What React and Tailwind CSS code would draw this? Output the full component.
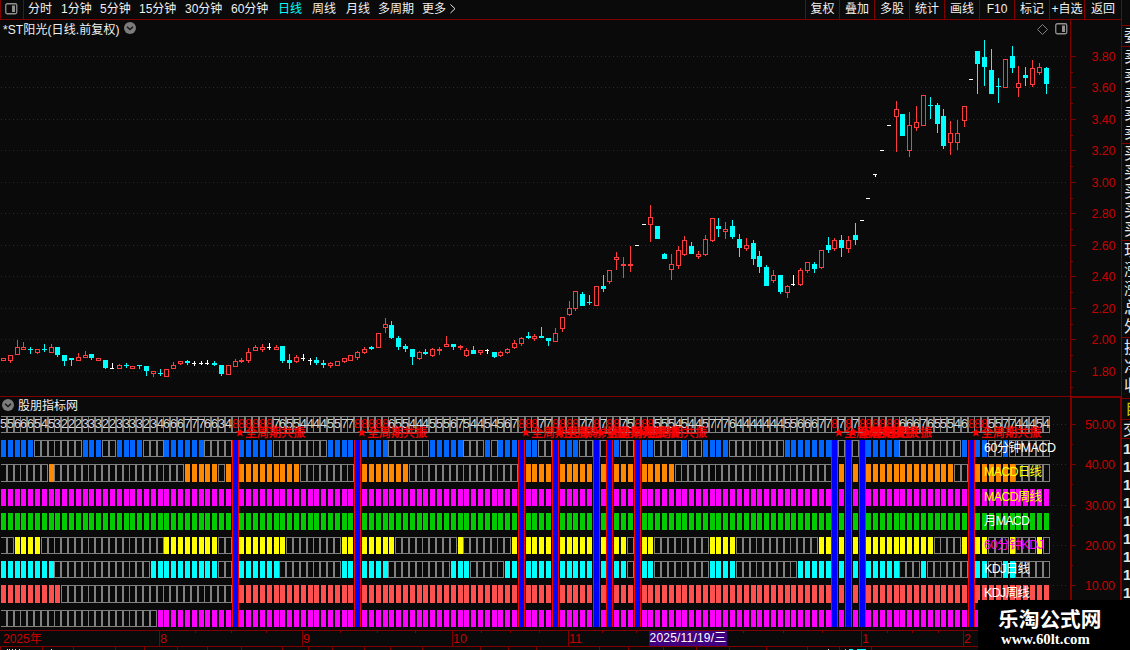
import React from 'react';

const FONT = 'font-["Liberation_Sans","Noto_Sans_CJK_SC",sans-serif]';
const COUNT = 154;
const RED = '#ff3c3c';
const CYAN = '#00ffff';
const LINE = '#800000';
const BG = '#0a0a0a';

// center pixel of a bar column
const px = (i) => Math.round(2.9 + 6.815 * i);

const periods = [
    { label: '分时', cls: 'w-[33px]' },
    { label: '1分钟', cls: 'w-[39px]' },
    { label: '5分钟', cls: 'w-[39px]' },
    { label: '15分钟', cls: 'w-[46px]' },
    { label: '30分钟', cls: 'w-[46px]' },
    { label: '60分钟', cls: 'w-[47px]' },
    { label: '日线', cls: 'w-[34px] text-[#00ffff]' },
    { label: '周线', cls: 'w-[34px]' },
    { label: '月线', cls: 'w-[32px]' },
    { label: '多周期', cls: 'w-[44px]' },
    { label: '更多', cls: 'w-[27px]' }
];

const tools = [
    { label: '复权', cls: 'w-[34px]' },
    { label: '叠加', cls: 'w-[35px]' },
    { label: '多股', cls: 'w-[35px]' },
    { label: '统计', cls: 'w-[35px]' },
    { label: '画线', cls: 'w-[35px]' },
    { label: 'F10', cls: 'w-[35px]' },
    { label: '标记', cls: 'w-[35px]' },
    { label: '+自选', cls: 'w-[35px]' },
    { label: '返回', cls: 'w-[37px]' }
];

// kind high top bottom low
const candles = `
r 358 358 361 361|r 355 355 361 363|r 340 347 355 355|r 342 347 350 350|c 347 349 350 354|r 349 349 353 354
c 344 349 350 352|r 344 347 353 353|c 347 347 355 357|c 355 355 361 366|c 358 358 360 366|r 353 357 361 361
r 351 355 358 358|c 354 354 358 360|r 358 358 361 361|c 360 360 368 369|w 363 368 369 369|r 364 365 369 369
c 363 365 366 368|r 366 366 369 369|c 365 365 366 369|c 366 366 371 376|r 371 371 374 377|c 369 373 374 376
r 369 369 377 377|r 362 365 369 369|r 361 361 364 365|c 360 361 363 365|w 361 363 364 366|w 361 363 364 365
w 360 363 364 365|c 361 363 365 366|c 365 365 374 376|r 365 365 375 375|r 359 361 367 367|r 358 360 362 363
r 348 352 361 363|r 345 347 351 351|r 344 347 350 352|w 343 347 348 350|r 345 347 350 350|c 346 346 361 363
c 354 360 363 369|r 355 357 362 363|w 354 358 359 361|w 358 360 361 365|c 357 360 363 365|c 360 363 365 368
r 362 363 366 368|r 361 361 366 366|r 358 358 362 363|r 355 355 361 361|r 351 352 358 360|r 347 349 353 354
c 346 347 349 350|r 333 333 348 348|r 318 324 328 333|c 321 325 338 339|c 336 338 347 350|c 344 346 349 352
c 349 349 357 365|r 351 352 359 360|c 349 352 354 355|r 348 349 356 357|r 347 349 351 355|r 336 344 347 347
c 344 344 347 350|r 345 346 348 350|r 348 350 356 357|c 346 350 354 354|r 350 350 353 355|w 349 350 351 354
c 352 352 357 358|r 351 352 356 357|r 348 349 353 354|r 340 343 348 349|r 337 338 344 346|c 332 336 338 339
r 334 336 339 341|c 327 336 338 338|c 338 338 341 346|r 328 333 342 342|r 317 317 329 332|r 301 308 315 316
r 291 291 309 311|c 292 294 306 306|c 295 302 303 305|r 286 286 306 306|c 275 286 289 292|r 270 270 282 284
r 252 257 260 270|r 257 264 266 278|r 246 264 266 272|w 245 245 246 246|w 224 224 225 225|r 205 217 225 242
c 226 226 239 239|c 253 254 259 259|r 254 264 270 280|r 246 250 266 269|r 236 240 255 256|c 242 246 254 254
r 251 254 257 259|r 235 239 255 256|r 218 218 241 242|c 218 226 229 237|r 222 229 232 239|c 220 226 237 239
c 234 239 248 257|r 238 245 249 251|c 240 243 259 265|c 251 256 267 273|c 265 267 286 286|r 270 275 281 283
c 275 275 292 294|r 285 286 293 298|w 275 284 285 286|r 268 270 285 286|r 262 262 271 273|c 262 264 269 273
r 250 250 268 269|c 237 245 250 253|r 238 240 249 251|c 235 240 248 257|r 236 240 249 253|c 223 235 240 245
w 220 220 221 221|w 198 198 199 199|w 174 174 175 177|w 150 150 151 151|w 125 125 126 126|r 101 109 117 152
c 114 114 136 136|r 112 125 151 157|r 106 122 128 131|r 95 95 126 126|c 97 105 106 119|c 103 105 124 133
c 109 116 146 149|r 121 133 143 155|r 120 133 143 150|r 106 106 121 127|w 79 79 80 80|c 51 51 64 94
c 40 57 67 86|c 49 70 94 94|c 78 86 87 103|r 59 59 88 88|c 46 56 68 73|r 66 83 88 97
c 67 75 78 86|r 60 68 85 87|r 63 67 73 75|c 67 68 84 94`
    .trim()
    .split(/[|\n]/)
    .map((row) => {
        const [kind, ...v] = row.split(' ');
        const [high, top, bottom, low] = v.map(Number);
        return { kind, high, top, bottom, low };
    });

// columns where all eight periods agree for the first time
const signals = [34, 52, 76, 81, 87, 89, 93, 122, 124, 126, 142];

const shared = [[77, 80], [82, 86], [88, 88]];

const bands = [
    {
        y: 440, h: 17, color: '#0066ff', label: '60分钟MACD', labelColor: '#ffffff', width: 72,
        on: [[0, 4], [12, 14], [17, 20], [24, 29], [35, 39], [48, 51], [53, 56], [63, 67], [71, 71], [73, 75], [77, 78],
            [82, 84], [90, 90], [94, 95], [100, 100], [103, 106], [115, 121], [127, 131], [141, 141], [143, 144], [147, 147]]
    },
    {
        y: 464, h: 18, color: '#ff8800', label: 'MACD日线', labelColor: '#ffff00', width: 58,
        on: [[7, 7], [27, 31], [33, 33], [35, 43], [53, 59], ...shared, [90, 92], [94, 98], [123, 123], [125, 125],
            [127, 139], [143, 148]]
    },
    { y: 489, h: 17, color: '#ff00ff', label: 'MACD周线', labelColor: '#ffff00', width: 58, on: [[0, 153]] },
    { y: 513, h: 17, color: '#00cc00', label: '月MACD', labelColor: '#ffffff', width: 46, on: [[0, 153]] },
    {
        y: 537, h: 17, color: '#ffff00', label: '60分钟KDJ', labelColor: '#ff00ff', width: 60,
        on: [[2, 5], [24, 31], [35, 41], [50, 51], [53, 57], [67, 67], [75, 75], ...shared, [90, 91], [94, 95],
            [104, 107], [120, 121], [123, 123], [125, 125], [127, 136], [141, 141], [143, 144], [148, 148], [152, 152]]
    },
    {
        y: 561, h: 17, color: '#00ffff', label: 'KDJ日线', labelColor: '#ffffff', width: 46,
        on: [[0, 7], [22, 31], [35, 40], [50, 51], [53, 56], [66, 68], [74, 75], ...shared, [90, 91], [94, 95],
            [104, 107], [117, 121], [123, 123], [125, 125], [127, 131], [135, 135], [143, 144], [147, 148]]
    },
    { y: 585, h: 18, color: '#ff5050', label: 'KDJ周线', labelColor: '#ffffff', width: 46, on: [[0, 8], [34, 153]] },
    { y: 610, h: 17, color: '#ff00ff', on: [[23, 153]] }
];

const columns = Array.from({ length: COUNT }, (_, i) => i);
const isOn = (band, i) => signals.includes(i) || band.on.some(([a, b]) => i >= a && i <= b);
const score = (i) => bands.filter((band) => isOn(band, i)).length;

const priceTicks = [56, 87, 119, 150, 182, 213, 245, 276, 308, 339, 371];
const scoreTicks = [424, 464, 505, 545, 585];

const months = [
    { x: 159, label: '8' },
    { x: 302, label: '9' },
    { x: 452, label: '10' },
    { x: 568, label: '11' },
    { x: 861, label: '1' },
    { x: 963, label: '2' }
];
const weekTicks = [195, 231, 266, 340, 377, 415, 481, 510, 539, 602, 636, 743, 783, 822, 887, 912, 938];
const tabTicks = [0, 42, 73, 115, 144, 177, 207, 241, 282, 308, 332, 364, 390, 422, 480, 508, 536, 599, 628, 663, 696, 729, 766, 807, 839, 871];

const PanelIcon = ({ className }) => (
    <svg className={className} width="13" height="12" viewBox="0 0 13 12">
        <rect x="0.75" y="0.75" width="11" height="10" rx="1.5" fill="none" stroke="#909090" strokeWidth="1.3" />
        <rect x="7" y="2.5" width="3" height="6.5" fill="#909090" />
    </svg>
);

const DropIcon = () => (
    <svg className="mb-[2px]" width="12" height="12" viewBox="0 0 12 12">
        <circle cx="6" cy="6" r="6" fill="#7c7c7c" />
        <path d="M3 4.7 L6 7.5 L9 4.7" fill="none" stroke="#151515" strokeWidth="1.4" />
    </svg>
);

const Grid = ({ ticks }) =>
    ticks.map((y) => (
        <line key={y} x1="1" x2="1069" y1={y + 0.5} y2={y + 0.5} stroke="#7a0a0a" strokeDasharray="1 3" />
    ));

const Header = () => (
    <div className="flex h-5 shrink-0 border-b border-l border-[#800000] text-[12px] leading-[19px] text-[#f0f0f0]">
        <div className="flex w-[23px] shrink-0 border-r border-[#800000] pt-[3px] pl-[4px]">
            <PanelIcon />
        </div>
        <div className="flex flex-1 pl-[4px]">
            {periods.map((p) => (
                <div key={p.label} className={`${p.cls} shrink-0 whitespace-nowrap`}>{p.label}</div>
            ))}
            <svg className="mt-[4px]" width="8" height="10" viewBox="0 0 8 10">
                <path d="M1.5 0.5 L6 4.7 L1.5 9" fill="none" stroke="#e6e6e6" />
            </svg>
        </div>
        {tools.map((t) => (
            <div key={t.label} className={`${t.cls} shrink-0 border-l border-[#800000] text-center whitespace-nowrap`}>
                {t.label}
            </div>
        ))}
    </div>
);

const Candle = ({ i, kind, high, top, bottom, low }) => {
    const x = px(i);
    if (kind === 'w') {
        return (
            <g fill="#ffffff">
                <rect x={x - 2} y={top} width="4" height="1" />
                {low - high > 1 && <rect x={x} y={high} width="1" height={low - high} />}
            </g>
        );
    }
    if (kind === 'c') {
        return (
            <g fill={CYAN}>
                <rect x={x} y={high} width="1" height={low - high} />
                <rect x={x - 2} y={top} width="5" height={bottom - top} />
            </g>
        );
    }
    return (
        <g fill={RED}>
            <rect x={x} y={high} width="1" height={low - high} />
            <rect x={x - 2} y={top} width="5" height={bottom - top} />
            {bottom - top > 2 && <rect x={x - 1} y={top + 1} width="3" height={bottom - top - 2} fill={BG} />}
        </g>
    );
};

const PriceChart = () => (
    <div className="flex w-[1070px] flex-col">
        <div className="flex h-[18px] items-center pr-[2px] pl-[3px] text-[12px] leading-4 text-[#f0f0f0]">
            <span className="mt-px mr-[5px] w-[116px] whitespace-nowrap tracking-[0.1px]">*ST阳光(日线.前复权)</span>
            <DropIcon />
            <svg className="mr-[7px] ml-auto" width="11" height="11" viewBox="0 0 11 11">
                <path d="M5.5 0.5 L10.5 5.5 L5.5 10.5 L0.5 5.5 Z" fill="none" stroke="#808080" />
            </svg>
            <PanelIcon />
        </div>
        <svg width="1070" height="358" viewBox="0 38 1070 358" shapeRendering="crispEdges">
            <Grid ticks={priceTicks} />
            {candles.map((c, i) => <Candle key={i} i={i} {...c} />)}
        </svg>
    </div>
);

// right-hand scale, shared by both panels
const Axis = ({ ticks, top, height, format, minor, textX, thick }) => (
    <svg className="shrink-0" width="51" height={height} viewBox={`0 ${top} 51 ${height}`} shapeRendering="crispEdges">
        <rect x="0" y={top} width={thick ? 2 : 1} height={height} fill={LINE} />
        {thick && <rect x="50" y={top} width="1" height={height} fill={LINE} />}
        {thick && <rect x="0" y={top} width="51" height="1" fill={LINE} />}
        {ticks.map((y, i) => (
            <g key={y}>
                <rect x="1" y={y} width="5" height="1" fill={LINE} />
                <rect x="1" y={y + minor} width="2" height="1" fill={LINE} />
                <text x={textX} y={y + 5} fill="#c80000" fontSize="12.5" textLength={thick ? 30 : 24}>{format(i)}</text>
            </g>
        ))}
    </svg>
);

// hollow cell, the borders of neighbours sit side by side
const Cell = ({ x, y, h }) => (
    <g>
        <rect x={x - 3} y={y} width="7" height={h} fill="#808080" />
        <rect x={x - 2} y={y + 1} width="5" height={h - 2} fill={BG} />
    </g>
);

const Bar = ({ x, y, h, color }) => (
    <g>
        <rect x={x - 2} y={y} width="6" height={h} fill="#000000" />
        <rect x={x - 2} y={y} width="5" height={h} fill={color} />
    </g>
);

const Signal = ({ i }) => {
    const x = px(i);
    return (
        <g>
            <path
                transform={`translate(${x + 5} 432.5)`}
                d="M0 -4.5 L1.2 -1.4 L4.5 -1.2 L1.9 0.8 L2.9 4 L0 2.2 L-2.9 4 L-1.9 0.8 L-4.5 -1.2 L-1.2 -1.4 Z"
                fill="#ff0000"
                shapeRendering="auto"
            />
            <text x={x + 10} y="437" fontSize="12" fill="#ff0000" stroke="#ff0000" strokeWidth="0.3">全周期共振</text>
        </g>
    );
};

const ResonanceChart = () => (
    <div className="flex w-[1070px] flex-col">
        <div className="flex h-[17px] items-center gap-[4px] pl-[2px] text-[12px] leading-4 text-[#f0f0f0]">
            <DropIcon />
            <span>股朋指标网</span>
        </div>
        <svg width="1070" height="216" viewBox="0 414 1070 216" shapeRendering="crispEdges">
            <Grid ticks={scoreTicks} />
            {columns.map((i) => (
                <g key={i}>
                    <Cell x={px(i)} y={416} h={17} />
                    {bands.map((band) =>
                        isOn(band, i) ? (
                            <Bar key={band.y} x={px(i)} y={band.y} h={band.h} color={band.color} />
                        ) : (
                            <Cell key={band.y} x={px(i)} y={band.y} h={band.h} />
                        )
                    )}
                </g>
            ))}
            <rect x="0" y="414" width="1" height="216" fill={BG} />
            {columns.map((i) => (
                <text
                    key={i}
                    x={px(i) + 0.5}
                    y="428"
                    fontSize="12.5"
                    textAnchor="middle"
                    fill={score(i) === 8 ? '#ff0000' : '#d8d8d8'}
                >
                    {score(i)}
                </text>
            ))}
            {signals.map((i) => (
                <g key={i}>
                    <rect x={px(i) - 3} y="440" width="7" height="187" fill="#ff0000" />
                    <rect x={px(i) - 2} y="440" width="5" height="187" fill="#0000ff" />
                </g>
            ))}
            {signals.map((i) => <Signal key={i} i={i} />)}
            {bands.filter((band) => band.label).map((band) => (
                <text key={band.y} x="984" y={band.y + 12} fontSize="12.5" fill={band.labelColor} textLength={band.width}>
                    {band.label}
                </text>
            ))}
        </svg>
    </div>
);

const TimeAxis = () => (
    <div className="relative h-[20px] shrink-0">
        <svg width="1121" height="20" viewBox="0 630 1121 20" shapeRendering="crispEdges">
            <rect x="0" y="630" width="1121" height="1" fill={LINE} />
            <rect x="0" y="646" width="1121" height="1" fill={LINE} />
            <text x="3" y="643" fontSize="12" fill="#c80000">2025年</text>
            {months.map((m) => (
                <g key={m.x}>
                    <rect x={m.x} y="631" width="1" height="15" fill={LINE} />
                    <text x={m.x + 1} y="643" fontSize="12.5" fill="#c80000">{m.label}</text>
                </g>
            ))}
            {weekTicks.map((x) => <rect key={x} x={x} y="631" width="1" height="2" fill={LINE} />)}
            {tabTicks.map((x) => <rect key={x} x={x} y="647" width="1" height="3" fill={LINE} />)}
            {[[7, 1], [9, 1], [12, 1], [15, 1], [19, 1], [51, 1], [828, 1]].map(([x, w]) => (
                <rect key={x} x={x} y="649" width={w} height="1" fill="#e6e6e6" />
            ))}
            {[[845, 1], [849, 4], [857, 9]].map(([x, w]) => (
                <rect key={x} x={x} y="649" width={w} height="1" fill={CYAN} />
            ))}
        </svg>
        <div className="absolute top-px left-[649px] h-[15px] w-[78px] bg-[#400080] text-center text-[12px] leading-[15px] tracking-[0.2px] whitespace-nowrap text-white">
            2025/11/19/三
        </div>
    </div>
);

const quoteGroups = [
    { cls: 'h-[21px] pl-[2px]', rows: ['委'] },
    { cls: 'h-[97px] pl-[2px]', rows: ['卖', '卖', '卖', '卖', '卖'] },
    { cls: 'h-[97px] pl-[2px]', rows: ['买', '买', '买', '买', '买'] },
    { cls: 'h-[97px] pl-[2px]', rows: ['现', '涨', '涨', '总', '外'] },
    { cls: 'h-[61px] pl-[2px]', rows: ['换', '净', '收'] },
    { cls: 'h-[21px] pl-[3px] text-[#c8c800]', rows: ['自'] },
    { cls: 'h-[19px] pl-px', rows: ['交'] }
];

// the quote panel is cut off by the window edge, only its first pixels show
const QuoteStrip = () => (
    <div className="flex w-[9px] shrink-0 flex-col overflow-hidden border-l border-[#800000] text-[16px] text-[#e6e6e6]">
        <div className="h-[25px] shrink-0" />
        {quoteGroups.map((g) => (
            <div key={g.rows[0]} className={`${g.cls} flex shrink-0 flex-col border-t border-[#800000]`}>
                {g.rows.map((r, i) => (
                    <div key={i} className="h-[19px] leading-[20px] whitespace-nowrap">{r}</div>
                ))}
            </div>
        ))}
        <div className="border-t border-[#800000] pl-px text-[15px] font-bold">
            {[1, 2, 3, 4, 5, 6, 7, 8, 9].map((n) => (
                <div key={n} className="h-[18px] leading-[19px]">1</div>
            ))}
        </div>
    </div>
);

const App = () => (
    <div className={`${FONT} relative flex h-[650px] w-[1130px] overflow-hidden bg-[#0a0a0a]`}>
        <div className="flex w-[1121px] shrink-0 flex-col">
            <Header />
            <div className="flex h-[376px] shrink-0">
                <PriceChart />
                <Axis ticks={priceTicks} top={20} height={376} minor={16} textX={21.5} format={(i) => (3.8 - i * 0.2).toFixed(2)} />
            </div>
            <div className="flex h-[234px] shrink-0 border-t border-[#800000]">
                <ResonanceChart />
                <Axis ticks={scoreTicks} top={397} height={233} minor={20} textX={15} format={(i) => (50 - i * 10).toFixed(2)} thick />
            </div>
            <TimeAxis />
        </div>
        <QuoteStrip />
        <div className="absolute right-0 bottom-0 flex h-[50px] w-[152px] flex-col bg-black pt-[7px] pl-[20px] text-white">
            <div className="text-[20.7px] leading-[26px] font-bold whitespace-nowrap">乐淘公式网</div>
            <div className='-mt-px pl-[3px] font-["Liberation_Serif",serif] text-[14.8px] leading-[14px] font-bold'>www.60lt.com</div>
        </div>
    </div>
);

export default App;
